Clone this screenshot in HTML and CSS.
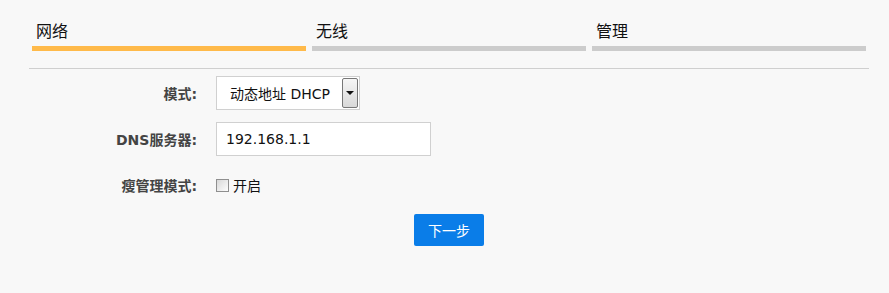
FILE: index.html
```html
<!DOCTYPE html>
<html lang="zh-CN">
<head>
<meta charset="utf-8">
<title>设置向导</title>
<link rel="stylesheet" href="styles.css">
</head>
<body>
<div class="wizard">
  <div class="steps">
    <div class="step active"><span class="step-name">网络</span><div class="step-bar"></div></div>
    <div class="step"><span class="step-name">无线</span><div class="step-bar"></div></div>
    <div class="step"><span class="step-name">管理</span><div class="step-bar"></div></div>
  </div>
  <div class="divider"></div>
  <form class="form">
    <div class="row">
      <label class="label">模式:</label>
      <div class="select">
        <span class="select-text">动态地址 DHCP</span>
        <span class="select-btn"><span class="caret"></span></span>
      </div>
    </div>
    <div class="row">
      <label class="label">DNS服务器:</label>
      <div class="input">192.168.1.1</div>
    </div>
    <div class="row">
      <label class="label">瘦管理模式:</label>
      <div class="check"><span class="box"></span><span class="check-text">开启</span></div>
    </div>
    <div class="actions">
      <button type="button" class="btn">下一步</button>
    </div>
  </form>
</div>
</body>
</html>
```
FILE: styles.css
```css
html, body {
  margin: 0;
  padding: 0;
  background: #f8f8f8;
  font-family: "DejaVu Sans", "Noto Sans CJK SC", sans-serif;
  color: #222;
}
.wizard {
  width: 840px;
  margin-left: 29px;
}
.steps {
  display: flex;
  padding-top: 22px;
}
.step {
  width: 280px;
  padding: 0 3px;
  box-sizing: border-box;
}
.step-name {
  display: block;
  padding-left: 4px;
  font-size: 16px;
  line-height: 20px;
  color: #111;
}
.step-bar {
  margin-top: 4px;
  height: 5px;
  background: #cccccc;
}
.step.active .step-bar {
  background: #ffba4a;
}
.divider {
  margin-top: 17px;
  height: 1px;
  background: #cfcfcf;
}
.form {
  margin: 0;
  padding-top: 7px;
}
.row {
  display: flex;
  align-items: center;
  height: 34px;
  margin-bottom: 12px;
}
.row:last-of-type {
  margin-bottom: 10px;
}
.label {
  width: 168px;
  flex: none;
  text-align: right;
  font-size: 14px;
  font-weight: bold;
  color: #444;
  margin-right: 19px;
}
.select {
  display: flex;
  align-items: center;
  width: 144px;
  height: 34px;
  box-sizing: border-box;
  border: 1px solid #d0d0d0;
  background: #fff;
  padding: 1px 1px 1px 13px;
}
.select-text {
  flex: 1;
  font-size: 14px;
  color: #111;
  white-space: nowrap;
}
.select-btn {
  width: 16px;
  height: 30px;
  flex: none;
  box-sizing: border-box;
  border: 1px solid #777;
  border-radius: 2px;
  background: linear-gradient(#f6f6f6, #d8d8d8);
  display: flex;
  align-items: center;
  justify-content: center;
}
.caret {
  width: 0;
  height: 0;
  border-left: 4px solid transparent;
  border-right: 4px solid transparent;
  border-top: 4px solid #111;
}
.input {
  width: 215px;
  height: 34px;
  box-sizing: border-box;
  border: 1px solid #d0d0d0;
  background: #fff;
  padding-left: 9px;
  font-size: 14px;
  line-height: 32px;
  color: #111;
}
.check {
  display: flex;
  align-items: center;
}
.box {
  width: 13px;
  height: 13px;
  box-sizing: border-box;
  border: 1px solid #8f8f8f;
  background: linear-gradient(135deg, #d8d8d8, #fdfdfd);
  margin-right: 4px;
}
.check-text {
  font-size: 14px;
  color: #111;
}
.actions {
  display: flex;
  justify-content: center;
}
.btn {
  width: 70px;
  height: 32px;
  border: none;
  border-radius: 2px;
  background: #0a7de8;
  color: #fff;
  font-family: "DejaVu Sans", "Noto Sans CJK SC", sans-serif;
  font-size: 14px;
  padding: 0;
}
```
